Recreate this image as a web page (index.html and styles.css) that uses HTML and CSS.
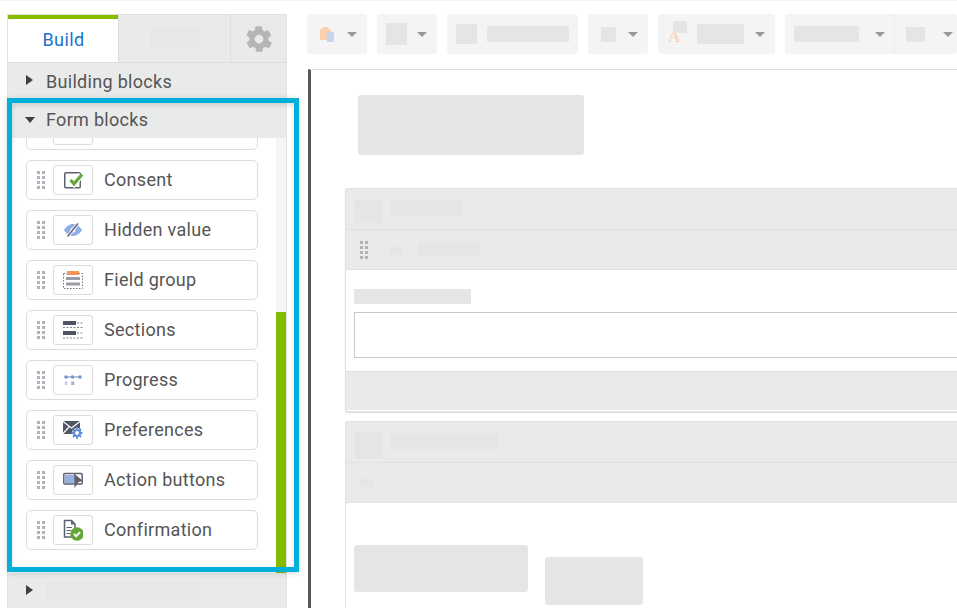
FILE: index.html
```html
<!DOCTYPE html>
<html lang="en">
<head>
<meta charset="utf-8">
<title>Form builder</title>
<link rel="stylesheet" href="styles.css">
</head>
<body>
<svg class="defs" width="0" height="0" aria-hidden="true">
  <symbol id="grip" viewBox="0 0 8 18">
    <path fill="#b2b3ba" d="M0 0h3v3H0zM5 0h3v3H5zM0 5h3v3H0zM5 5h3v3H5zM0 10h3v3H0zM5 10h3v3H5zM0 15h3v3H0zM5 15h3v3H5z"/>
  </symbol>
  <symbol id="caret" viewBox="0 0 10 5"><path fill="#999" d="M0 0h10L5 5z"/></symbol>
</svg>
<div class="page">
  <aside class="sidebar">
    <div class="tabs">
      <div class="tab tab-active">Build</div>
      <div class="tab tab-mid"><span class="ph ph-tab"></span></div>
      <div class="tab tab-gear">
        <svg width="30" height="30" viewBox="0 0 24 24"><path fill="#b4b5b6" d="M19.4 13c.1-.3.1-.7.1-1s0-.7-.1-1l2.200-1.700c.2-.2.2-.4.1-.6l-2.100-3.600c-.1-.2-.4-.3-.6-.2l-2.600 1c-.5-.4-1.100-.7-1.700-1l-.4-2.700c0-.2-.2-.4-.5-.4h-4.200c-.3 0-.5.2-.5.4l-.4 2.700c-.6.3-1.200.6-1.700 1l-2.600-1c-.2-.1-.5 0-.6.2L2.200 8.700c-.1.2-.1.4.1.6L4.500 11c-.1.3-.1.7-.1 1s0 .7.100 1l-2.200 1.700c-.2.2-.2.4-.1.6l2.100 3.600c.1.2.4.3.6.2l2.600-1c.5.4 1.100.7 1.700 1l.4 2.700c0 .2.2.4.5.4h4.200c.3 0 .5-.2.5-.4l.4-2.700c.6-.3 1.200-.6 1.700-1l2.600 1c.2.1.5 0 .6-.2l2.100-3.600c.1-.2.1-.4-.1-.6zM12 15.500a3.500 3.500 0 1 1 0-7 3.500 3.500 0 0 1 0 7z"/></svg>
      </div>
    </div>
    <div class="acc-head acc-closed"><span class="tri tri-right"></span>Building blocks</div>
    <div class="acc-head acc-open"><span class="tri tri-down"></span>Form blocks</div>
    <div class="list-wrap">
      <div class="list">
        <div class="item item-cut"><span class="ico"></span></div>

        <div class="item">
          <svg class="grip"><use href="#grip"/></svg>
          <span class="ico">
            <svg width="22" height="20" viewBox="0 0 22 20"><rect x="2.750" y="2.750" width="15.500" height="15" rx="1" fill="none" stroke="#5d6470" stroke-width="1.500"/><path fill="none" stroke="#fff" stroke-width="6" d="M9 10l3 3.500L19 5"/><path fill="none" stroke="#63a63a" stroke-width="3.200" d="M8.500 10l3.500 3.800L20 4.500"/></svg>
          </span>
          <span class="label">Consent</span>
        </div>

        <div class="item">
          <svg class="grip"><use href="#grip"/></svg>
          <span class="ico">
            <svg width="20" height="16" viewBox="0 0 20 16"><path fill="#8fb0e6" d="M1 8c2-3.500 5.500-6 9-6s7 2.500 9 6c-2 3.500-5.500 6-9 6s-7-2.500-9-6z"/><circle cx="10" cy="8" r="2.500" fill="#fff"/><path stroke="#fff" stroke-width="3" d="M4.500 14.500L15 1.500"/><path stroke="#666b76" stroke-width="1.600" d="M4.500 14.500L15 1.500"/></svg>
          </span>
          <span class="label">Hidden value</span>
        </div>

        <div class="item">
          <svg class="grip"><use href="#grip"/></svg>
          <span class="ico">
            <svg width="20" height="20" viewBox="0 0 20 20"><rect x=".5" y="3.500" width="19" height="15" fill="none" stroke="#70747e" stroke-dasharray="1.500 1.500"/><rect x="4" y="1" width="12" height="4" fill="#f5955a"/><rect x="3" y="7" width="14" height="3" fill="#9a9ca3"/><rect x="3" y="12.500" width="14" height="3" fill="#9a9ca3"/></svg>
          </span>
          <span class="label">Field group</span>
        </div>

        <div class="item">
          <svg class="grip"><use href="#grip"/></svg>
          <span class="ico">
            <svg width="20" height="20" viewBox="0 0 20 20"><rect x="0" y="1" width="13" height="4" fill="#4f5563"/><path fill="none" stroke="#80848d" stroke-dasharray="2 1.500" d="M14 3h6M0 7.500h20"/><rect x="0" y="11" width="13" height="4" fill="#4f5563"/><path fill="none" stroke="#80848d" stroke-dasharray="2 1.500" d="M14 13h6M0 18h20"/></svg>
          </span>
          <span class="label">Sections</span>
        </div>

        <div class="item">
          <svg class="grip"><use href="#grip"/></svg>
          <span class="ico">
            <svg width="20" height="14" viewBox="0 0 20 14"><path stroke="#7d89a0" d="M2 4h16"/><circle cx="3" cy="4" r="1.800" fill="#6f96d8"/><circle cx="9.500" cy="4" r="1.800" fill="#6f96d8"/><circle cx="17" cy="4" r="1.800" fill="#6f96d8"/><path stroke="#8fa8d4" stroke-width="1.300" d="M3 8.500v3.500M9 8.500v3.500M10.500 8.500v3.500"/></svg>
          </span>
          <span class="label">Progress</span>
        </div>

        <div class="item">
          <svg class="grip"><use href="#grip"/></svg>
          <span class="ico">
            <svg width="22" height="20" viewBox="0 0 22 20"><rect x="1" y="1" width="17" height="13" fill="#4f5563"/><path fill="none" stroke="#fff" stroke-width="1.200" d="M1 1.500l8.500 6.500L18 1.500M1 13.500l6-6.500"/><circle cx="15" cy="13" r="5" fill="#fff"/><circle cx="15" cy="13" r="3" fill="none" stroke="#5e8fdb" stroke-width="2.200"/><path stroke="#5e8fdb" stroke-width="1.800" d="M15 7v2M15 17v2M9.500 13h2M18.500 13h2M11 9l1.500 1.500M19 9l-1.500 1.500M11 17l1.500-1.500M19 17l-1.500-1.500"/></svg>
          </span>
          <span class="label">Preferences</span>
        </div>

        <div class="item">
          <svg class="grip"><use href="#grip"/></svg>
          <span class="ico">
            <svg width="20" height="16" viewBox="0 0 20 16"><rect x=".8" y="1.500" width="18.400" height="10.500" rx="1" fill="#fff" stroke="#5b6170" stroke-width="1.500"/><rect x="2" y="3" width="9" height="8" fill="#96b2e4"/><path fill="#5b6170" d="M11 1.500l9 7.500-4.500 1L11.500 16z"/></svg>
          </span>
          <span class="label">Action buttons</span>
        </div>

        <div class="item">
          <svg class="grip"><use href="#grip"/></svg>
          <span class="ico">
            <svg width="20" height="22" viewBox="0 0 20 22"><path fill="#fff" stroke="#5b6170" stroke-width="1.500" d="M1.500 1.500h7L12 5v13H1.500z"/><path fill="#5b6170" d="M8 1.500l4 4H8z"/><path stroke="#5b6170" stroke-width="1.200" d="M3.500 8.500H9M3.500 11.500H8M3.500 14.500H7"/><circle cx="14" cy="15" r="6.800" fill="#63a63a"/><path fill="none" stroke="#fff" stroke-width="1.800" d="M11 15l2.200 2.200 3.800-4"/></svg>
          </span>
          <span class="label">Confirmation</span>
        </div>
      </div>
      <div class="track"><div class="thumb"></div></div>
    </div>
    <div class="acc-foot"><span class="tri tri-right"></span><span class="ph ph-foot"></span></div>
    <div class="highlight"></div>
  </aside>

  <main class="main">
    <div class="toolbar">
      <div class="tb tb-1">
        <svg width="15" height="18" viewBox="0 0 15 18"><path fill="#fccfb0" d="M0 4h2.500V2h6v2H11v11H0z"/><rect x="7" y="7" width="7" height="10" rx="1" fill="#c5d5f0"/></svg>
        <svg class="caret"><use href="#caret"/></svg>
      </div>
      <div class="tb tb-2"><span class="ph ph-sq"></span><svg class="caret"><use href="#caret"/></svg></div>
      <div class="tb tb-3"><span class="ph ph-sq2"></span><span class="ph ph-t1"></span></div>
      <div class="tb tb-4"><span class="ph ph-sq3"></span><svg class="caret"><use href="#caret"/></svg></div>
      <div class="tb tb-5">
        <span class="font-a">A<span class="ph ph-a"></span></span>
        <span class="ph ph-t2"></span>
        <svg class="caret"><use href="#caret"/></svg>
      </div>
      <div class="tb tb-6">
        <div class="seg seg-l"><span class="ph ph-t3"></span><svg class="caret"><use href="#caret"/></svg></div>
        <div class="seg seg-r"><span class="ph ph-sq4"></span><svg class="caret"><use href="#caret"/></svg></div>
      </div>
    </div>

    <div class="canvas">
      <div class="ph ph-title"></div>

      <section class="panel panel-a">
        <div class="p-head">
          <div class="p-stack"><span class="ph ph-s1"></span><span class="ph ph-s1"></span></div>
          <span class="ph ph-h1"></span>
        </div>
        <div class="p-row">
          <svg class="grip-b"><use href="#grip"/></svg>
          <span class="ph ph-r1"></span>
          <span class="ph ph-r2"></span>
        </div>
        <div class="p-body">
          <div class="ph ph-lbl"></div>
          <div class="field"></div>
        </div>
        <div class="p-foot"></div>
      </section>

      <section class="panel panel-b">
        <div class="p-head p-head-b">
          <span class="ph ph-big"></span>
          <span class="ph ph-h2"></span>
        </div>
        <div class="p-row p-row-b"><span class="ph ph-r3"></span></div>
        <div class="p-body-b">
          <span class="ph ph-btn1"></span>
          <span class="ph ph-btn2"></span>
        </div>
      </section>
    </div>
  </main>
</div>
</body>
</html>
```
FILE: styles.css
```css
* { box-sizing: border-box; }
html, body { margin: 0; padding: 0; height: 100%; overflow: hidden; background: #fff; }
body { font-family: Roboto, "Liberation Sans", sans-serif; color: #555; }
.defs { position: absolute; }

.page {
  display: flex;
  width: 957px;
  height: 608px;
  padding-top: 13px;
  padding-left: 7px;
  border-top: 1px solid #f4f4f4;
  overflow: hidden;
}

.ph { display: block; background: #e4e5e5; }

/* Sidebar */
.sidebar {
  position: relative;
  flex: none;
  width: 280px;
  height: 594px;
  background: #e9eaea;
  border: 1px solid #e0e1e1;
  border-bottom: 0;
  display: flex;
  flex-direction: column;
}
.tabs { display: flex; height: 48px; flex: none; border-bottom: 1px solid #dcdddd; }
.tab { display: flex; align-items: center; justify-content: center; }
.tab-active {
  width: 110px;
  height: 47px;
  padding-bottom: 3px;
  padding-left: 1px;
  background: #fff;
  border-top: 4px solid #85bc00;
  color: #1a73d0;
  font-size: 18px;
  letter-spacing: .4px;
}
.tab-mid { width: 113px; border-left: 1px solid #dcdddd; border-right: 1px solid #dcdddd; }
.ph-tab { width: 50px; height: 20px; background: #e6e7e7; }
.tab-gear { flex: 1; }

.acc-head {
  flex: none;
  display: flex;
  align-items: center;
  padding-left: 18px;
  font-size: 18px;
  letter-spacing: .3px;
  color: #555;
}
.acc-closed { height: 37px; padding-bottom: 1px; }
.acc-open { height: 38px; background: #e9eaea; box-shadow: 0 1px 0 #e4e5e5; }
.tri { flex: none; width: 0; height: 0; }
.tri-right { border-left: 7px solid #3f3f3f; border-top: 5px solid transparent; border-bottom: 5px solid transparent; margin-right: 13px; margin-bottom: 2px; }
.tri-down { border-top: 6px solid #3f3f3f; border-left: 5px solid transparent; border-right: 5px solid transparent; margin-left: -1px; margin-right: 11px; margin-top: 2px; }

.list-wrap {
  flex: none;
  height: 435px;
  background: #fff;
  display: flex;
  overflow: hidden;
}
.list {
  flex: 1;
  padding-left: 18px;
  padding-right: 18px;
  display: flex;
  flex-direction: column;
  gap: 10px;
}
.item {
  flex: none;
  height: 40px;
  width: 232px;
  background: #fff;
  border: 1px solid #dcdcdc;
  border-radius: 5px;
  display: flex;
  align-items: center;
  padding-left: 10px;
  font-size: 18px;
  letter-spacing: .3px;
  color: #555;
}
.item-cut { margin-top: -28px; padding-left: 26px; }
.grip { width: 8px; height: 18px; flex: none; margin-right: 8px; }
.ico {
  flex: none;
  width: 40px;
  height: 30px;
  border: 1px solid #dcdcdc;
  border-radius: 3px;
  background: #fff;
  display: flex;
  align-items: center;
  justify-content: center;
  margin-right: 11px;
}
.label { margin-bottom: 2px; }
.track {
  flex: none;
  width: 10px;
  background: #f5f5f5;
  display: flex;
  flex-direction: column;
  justify-content: flex-end;
}
.thumb { height: 261px; background: #85bc00; }

.acc-foot {
  flex: none;
  height: 35px;
  padding-top: 1px;
  display: flex;
  align-items: center;
  padding-left: 18px;
}
.acc-foot .tri { margin-bottom: 3px; }
.ph-foot { width: 155px; height: 20px; background: #e6e7e7; }

.highlight {
  position: absolute;
  z-index: 2;
  left: -1px;
  top: 83px;
  width: 292px;
  height: 474px;
  border: 5px solid #00b0da;
  box-shadow: 0 1px 6px rgba(0,0,0,.16), inset 0 2px 5px rgba(0,0,0,.14);
  pointer-events: none;
}

/* Main */
.main {
  flex: none;
  width: 650px;
  margin-left: 20px;
  display: flex;
  flex-direction: column;
  overflow: hidden;
}
.toolbar { flex: none; display: flex; gap: 10px; height: 40px; }
.tb {
  flex: none;
  height: 40px;
  background: #f4f4f4;
  border-radius: 3px;
  display: flex;
  align-items: center;
}
.caret { width: 10px; height: 5px; flex: none; }
.tb-1 { width: 60px; padding-left: 13px; gap: 12px; }
.tb-1 .caret { margin-top: 1px; }
.tb-2 { width: 60px; padding-left: 9px; gap: 10px; }
.ph-sq { width: 21px; height: 22px; }
.tb-3 { width: 131px; padding-left: 9px; gap: 10px; }
.ph-sq2 { width: 21px; height: 20px; }
.ph-t1 { width: 82px; height: 16px; }
.tb-4 { width: 60px; padding-left: 13px; gap: 12px; }
.ph-sq3 { width: 15px; height: 15px; }
.tb-5 { width: 117px; padding-left: 10px; position: relative; }
.font-a {
  position: relative;
  display: block;
  width: 15px;
  height: 20px;
  font-family: "Liberation Serif", serif;
  font-weight: 700;
  font-size: 17px;
  line-height: 20px;
  color: #fcd3b8;
  margin-right: 14px;
  margin-top: 6px;
}
.ph-a { position: absolute; left: 5px; top: -6px; width: 14px; height: 12px; }
.ph-t2 { width: 47px; height: 20px; margin-right: 11px; }
.tb-6 { width: 172px; padding: 0; }
.seg { height: 40px; display: flex; align-items: center; }
.seg-l { width: 110px; padding-left: 9px; border-right: 1px solid #ececec; }
.ph-t3 { width: 65px; height: 16px; margin-right: 16px; }
.seg-r { flex: 1; padding-left: 11px; gap: 18px; }
.ph-sq4 { width: 19px; height: 15px; flex: none; }

.canvas {
  flex: 1;
  margin-top: 15px;
  margin-left: 1px;
  border-top: 1px solid #dcdcdc;
  border-left: 3px solid #555759;
  padding-left: 34px;
  padding-top: 25px;
}
.ph-title { width: 226px; height: 60px; margin-left: 13px; border-radius: 3px; }

.panel {
  width: 700px;
  border: 1px solid #e0e1e1;
  border-radius: 2px;
  background: #fff;
}
.panel-a { margin-top: 33px; height: 224px; box-shadow: 0 1px 1px #ddd; }
.panel-b { margin-top: 9px; height: 300px; }
.p-head { height: 41px; background: #e9eaea; border-bottom: 1px solid #e0e1e1; display: flex; align-items: flex-start; padding: 11px 0 0 9px; gap: 9px; }
.p-stack { display: flex; flex-direction: column; gap: 1px; }
.ph-s1 { width: 27px; height: 11px; background: #e4e5e5; }
.ph-h1 { width: 72px; height: 16px; }
.p-row { height: 40px; background: #e9eaea; border-bottom: 1px solid #e0e1e1; display: flex; align-items: center; padding-left: 14px; }
.grip-b { width: 8px; height: 18px; flex: none; margin-right: 22px; }
.ph-r1 { width: 13px; height: 8px; margin-right: 15px; margin-top: 2px; }
.ph-r2 { width: 62px; height: 13px; }
.p-body { height: 101px; padding: 19px 0 0 8px; }
.ph-lbl { width: 117px; height: 15px; }
.field { margin-top: 8px; height: 46px; width: 700px; border: 1px solid #c8c8c8; }
.p-foot { height: 39px; background: #e9eaea; border-top: 1px solid #e0e1e1; }

.p-head-b { padding: 10px 0 0 9px; }
.ph-big { width: 27px; height: 27px; border-radius: 2px; }
.ph-h2 { width: 107px; height: 16px; margin-top: 1px; }
.p-row-b { padding-left: 14px; }
.ph-r3 { width: 13px; height: 8px; }
.p-body-b { display: flex; align-items: flex-start; padding: 42px 0 0 8px; }
.ph-btn1 { width: 174px; height: 47px; border-radius: 3px; }
.ph-btn2 { width: 98px; height: 48px; margin-left: 17px; margin-top: 12px; border-radius: 3px; }
```
